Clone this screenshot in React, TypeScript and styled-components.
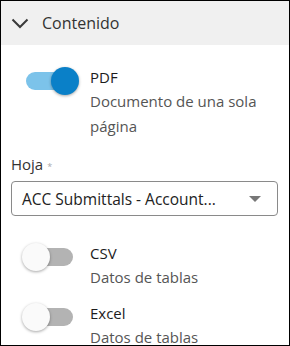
import React from "react";
import styled, { createGlobalStyle } from "styled-components";

const Global = createGlobalStyle`
  html, body { margin: 0; padding: 0; background: #fff; }
  body { font-family: "Open Sans", "Liberation Sans", sans-serif; color: #333; }
  * { box-sizing: border-box; }
`;

const Frame = styled.div`
  width: 290px;
  height: 346px;
  border: 1px solid #000;
  overflow: hidden;
  background: #fff;
  display: flex;
  flex-direction: column;
`;

const Header = styled.div`
  height: 44px;
  background: #f0f0f0;
  display: flex;
  align-items: center;
  padding-left: 10px;
  gap: 13px;
  flex-shrink: 0;
`;

const HeaderTitle = styled.span`
  font-size: 16px;
  color: #333;
`;

const Body = styled.div`
  display: flex;
  flex-direction: column;
  padding-top: 20px;
`;

const OptionRow = styled.div<{ $mt?: number }>`
  display: flex;
  align-items: flex-start;
  padding-left: 21px;
  margin-top: ${(p) => p.$mt ?? 0}px;
`;

const SwitchWrap = styled.div`
  position: relative;
  width: 57px;
  height: 28px;
  margin-top: 2px;
  margin-right: 11px;
  flex-shrink: 0;
`;

const Track = styled.div<{ $on: boolean }>`
  position: absolute;
  left: 4px;
  top: 5px;
  width: 47px;
  height: 18px;
  border-radius: 9px;
  background: ${(p) => (p.$on ? "#7cc3ea" : "#b3b3b3")};
`;

const Knob = styled.div<{ $on: boolean }>`
  position: absolute;
  top: 0;
  left: ${(p) => (p.$on ? 29 : 0)}px;
  width: 28px;
  height: 28px;
  border-radius: 50%;
  background: ${(p) => (p.$on ? "#0a80c8" : "#fafafa")};
  box-shadow: 0 1px 3px rgba(0, 0, 0, 0.35);
`;

const Texts = styled.div`
  display: flex;
  flex-direction: column;
`;

const OptTitle = styled.div`
  font-size: 15px;
  line-height: 24px;
  color: #1c1c1c;
  font-weight: 500;
`;

const OptDesc = styled.div`
  font-size: 15px;
  line-height: 25px;
  color: #555;
  width: 185px;
`;

const Field = styled.div`
  display: flex;
  flex-direction: column;
  padding: 0 11px 0 10px;
  margin-top: 12px;
`;

const Label = styled.div`
  font-size: 15px;
  line-height: 20px;
  color: #333;
  display: flex;
  align-items: center;
  gap: 4px;
`;

const Req = styled.span`
  font-size: 9px;
  color: #aaa;
  margin-top: 6px;
`;

const Select = styled.div`
  margin-top: 4px;
  height: 35px;
  border: 1px solid #8a8a8a;
  border-radius: 4px;
  display: flex;
  align-items: center;
  justify-content: space-between;
  padding: 0 16px 0 10px;
  font-size: 15.5px;
  color: #222;
`;

const Caret = styled.div`
  width: 0;
  height: 0;
  border-left: 6px solid transparent;
  border-right: 6px solid transparent;
  border-top: 6px solid #777;
`;

const Switch = ({ on }: { on: boolean }) => (
  <SwitchWrap>
    <Track $on={on} />
    <Knob $on={on} />
  </SwitchWrap>
);

export default function App() {
  return (
    <>
      <Global />
      <Frame>
        <Header>
          <svg width="18" height="11" viewBox="0 0 18 11">
            <path d="M1.5 1.5 L9 9 L16.5 1.5" fill="none" stroke="#3a3a3a" strokeWidth="2" />
          </svg>
          <HeaderTitle>Contenido</HeaderTitle>
        </Header>
        <Body>
          <OptionRow>
            <Switch on />
            <Texts>
              <OptTitle>PDF</OptTitle>
              <OptDesc>Documento de una sola página</OptDesc>
            </Texts>
          </OptionRow>
          <Field>
            <Label>
              Hoja <Req>*</Req>
            </Label>
            <Select>
              <span>ACC Submittals - Account...</span>
              <Caret />
            </Select>
          </Field>
          <OptionRow $mt={25}>
            <Switch on={false} />
            <Texts>
              <OptTitle>CSV</OptTitle>
              <OptDesc>Datos de tablas</OptDesc>
            </Texts>
          </OptionRow>
          <OptionRow $mt={11}>
            <Switch on={false} />
            <Texts>
              <OptTitle>Excel</OptTitle>
              <OptDesc>Datos de tablas</OptDesc>
            </Texts>
          </OptionRow>
        </Body>
      </Frame>
    </>
  );
}
